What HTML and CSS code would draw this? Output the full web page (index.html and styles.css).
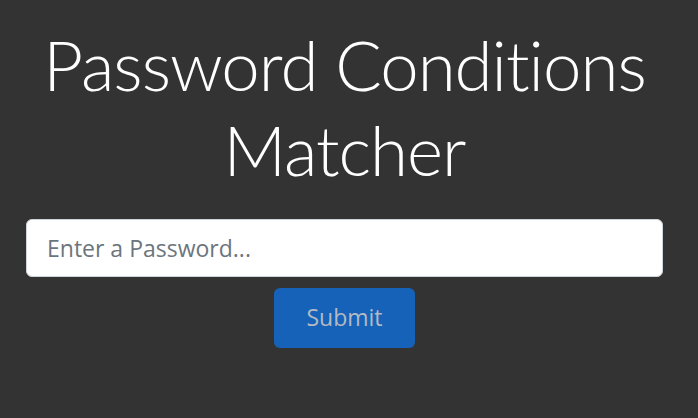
FILE: index.html
```html
<!DOCTYPE html>
<html lang="en">
<head>
<meta charset="utf-8">
<title>Password Conditions Matcher</title>
<link rel="stylesheet" href="styles.css">
</head>
<body>
<main class="page">
  <h1 class="title">Password Conditions Matcher</h1>
  <form class="form">
    <input class="field" type="text" placeholder="Enter a Password...">
    <button class="submit" type="button">Submit</button>
  </form>
</main>
</body>
</html>
```

FILE: styles.css
```css
html, body {
  margin: 0;
  padding: 0;
  background: #333333;
  height: 100%;
}

.page {
  display: flex;
  flex-direction: column;
  align-items: stretch;
  padding: 22px 35px 0 26px;
  font-family: "Open Sans", "Noto Sans", sans-serif;
}

.title {
  margin: 0;
  text-align: center;
  color: #ffffff;
  font-family: "Lato", "Open Sans", sans-serif;
  font-weight: 300;
  font-size: 69px;
  letter-spacing: -1px;
  font-variant-ligatures: none;
  line-height: 85px;
  padding: 0;
}

.form {
  display: flex;
  flex-direction: column;
  align-items: center;
  gap: 11px;
  margin-top: 27px;
}

.field {
  box-sizing: border-box;
  width: 100%;
  height: 58px;
  border: 1px solid #cfd4da;
  border-radius: 6px;
  background: #ffffff;
  padding: 0 20px;
  font-family: "Open Sans", "Noto Sans", sans-serif;
  font-size: 23px;
  color: #212529;
  outline: none;
}

.field::placeholder {
  color: #6c757d;
  opacity: 1;
}

.submit {
  box-sizing: border-box;
  width: 141px;
  height: 60px;
  border: none;
  border-radius: 6px;
  background: #1562b8;
  color: #b4bac4;
  font-family: "Open Sans", "Noto Sans", sans-serif;
  font-size: 23px;
  padding: 0 0 2px;
}
```
